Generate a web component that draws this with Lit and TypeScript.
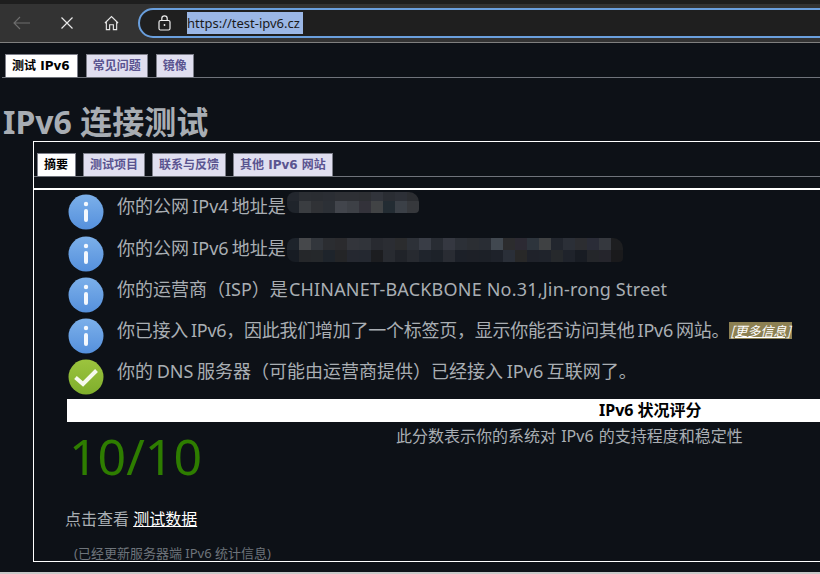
import { LitElement, html, css } from "lit";
import { customElement } from "lit/decorators.js";

const info = html`<svg class="ico" viewBox="0 0 36 36"><defs><linearGradient id="gi" x1="0" y1="0" x2="0" y2="1"><stop offset="0" stop-color="#7cb0ea"/><stop offset="1" stop-color="#5590dc"/></linearGradient></defs><circle cx="18" cy="18" r="17.5" fill="url(#gi)"/><circle cx="18" cy="10" r="2.2" fill="#f4f8fd"/><rect x="16" y="15" width="4" height="13" rx="2" fill="#f4f8fd"/></svg>`;
const ok = html`<svg class="ico" viewBox="0 0 36 36"><defs><linearGradient id="gk" x1="0" y1="0" x2="0" y2="1"><stop offset="0" stop-color="#9cc43e"/><stop offset="1" stop-color="#7fae2c"/></linearGradient></defs><circle cx="18" cy="18" r="17.5" fill="url(#gk)"/><path d="M7.5 18.5 L15 25 L28.5 11.5" fill="none" stroke="#f6f9ee" stroke-width="4"/></svg>`;

const r1a = ["#23272e","#2b2e33","#2a2d32","#2b2e34","#2e3035","#2e3035","#2d2f33","#31343b","#2a2d33","#2d3037","#2b2d31"];
const r1b = ["#1f242b","#3a3d41","#303236","#2c3036","#42454c","#3d4046","#33323a","#414345","#232c33","#3b4047","#36383c"];
const r2a = ["#1d232b","#46484b","#32363c","#2b2d31","#2b2b2e","#33353b","#31343a","#282a30","#2b2d33","#2b2c2e","#2d3138","#393d46","#282c33","#353841","#2c3037","#2b2e33","#292d34","#414850","#2c2c2e","#2c2a33","#2d343c","#3f4143","#22262e","#2b2f37","#2c2d31","#2a2c37","#35383e","#1d1e20"];
const r2b = ["#171c23","#25272a","#25282b","#1e242b","#242527","#252830","#242830","#1c1d20","#282b31","#202329","#272a30","#1f242c","#1d2229","#292c33","#1c2028","#1d2027","#1c2027","#1e222a","#2a2f38","#282828","#1f222a","#1f232b","#26292c","#1f232b","#181c23","#24262a","#25252c","#1a1a1c"];

const blur = (a: string[], b: string[], cls: string) => html`<span class="blur ${cls}">${[a, b].map(
  (row) => html`<span class="blur-row">${row.map((c) => html`<i style="background:${c}"></i>`)}</span>`
)}</span>`;

@customElement("app-root")
export class AppRoot extends LitElement {
  static styles = css`
    :host { display: block; width: 820px; height: 574px; overflow: hidden; background: #0d1117; font-family: "Noto Sans", "Noto Sans CJK SC", sans-serif; color: #a9aeb3; }
    .chrome { height: 43px; box-sizing: border-box; background: linear-gradient(#1e1e1e 0 4px, #333 4px); border-bottom: 1px solid #7f7f7f; display: flex; align-items: center; padding-top: 4px; }
    .nav { display: flex; align-items: center; flex: none; }
    .nav svg { display: block; flex: none; }
    .back { margin-left: 13px; }
    .close { margin-left: 29px; }
    .home { margin-left: 30px; }
    .pill { margin-left: 19px; flex: 1; margin-right: -40px; height: 30px; box-sizing: border-box; border: 2px solid #6a9fdd; border-radius: 15px; background: #1f1f1f; display: flex; align-items: center; padding-left: 18px; }
    .url { margin-left: 16px; background: #9bb7e6; color: #1a1a1a; font: 13px/22px "Noto Sans", sans-serif; white-space: nowrap; width: 116px; }
    .tabs { display: flex; align-items: flex-end; gap: 8px; border-bottom: 1px solid #6f737b; font: bold 12px/16px "DejaVu Sans", "Noto Sans CJK SC", sans-serif; }
    .tabs span { box-sizing: border-box; height: 23px; padding: 3px 6px 0; background: #e0dff0; color: #5a5490; border: 1px solid #7d7f8a; border-bottom: 0; white-space: nowrap; }
    .tabs span.on { background: #fff; color: #000; padding-right: 7px; }
    .top { margin: 11px 0 0 2px; padding-left: 3px; }
    h1 { margin: 26px 0 0 3px; font: bold 32px/36px "Noto Sans", "Noto Sans CJK SC", sans-serif; color: #a8adb3; white-space: nowrap; height: 36px; }
    .box { margin: 1px 0 0 33px; width: 800px; height: 421px; box-sizing: border-box; border: 1px solid #fff; border-right: 0; position: relative; overflow: hidden; }
    .inner { margin-top: 11px; padding-left: 3px; gap: 7px; }
    .rule { height: 2px; background: #fff; margin-top: 11px; }
    .rows { padding-left: 34px; }
    .row { height: 41px; display: flex; align-items: center; gap: 13px; font-size: 18px; line-height: 24px; white-space: nowrap; }
    .ico { width: 36px; height: 36px; flex: none; display: block; }
    .rows .row:first-child { height: 43px; }
    .row .txt { display: flex; align-items: center; margin-top: -12px; word-spacing: -1.5px; }
    .row .tight { letter-spacing: -.25px; }
    .row .loose { word-spacing: -1px; }
    .isp { letter-spacing: .2px; word-spacing: 0; margin-left: 1px; }
    .blur { display: flex; flex-direction: column; margin-left: 1px; border-radius: 8px 10px 4px 8px; overflow: hidden; }
    .b1 { height: 21px; transform: translateY(-3px); }
    .b1 .blur-row:first-child { height: 9px; }
    .b2 { transform: translateY(2px); }
    .blur-row { display: flex; height: 12px; flex: none; }
    .blur-row i { width: 12px; height: 100%; display: block; flex: none; }
    .more { margin-left: 0; background: #8c8052; color: #fff; font: italic 13px/17px "Noto Sans CJK SC", sans-serif; letter-spacing: 0; text-decoration: underline; padding: 0 1px; transform: translateY(1px); }
    .score-head { margin: 2px 0 0 33px; height: 23px; background: #fff; color: #000; font: bold 16px/23px "Noto Sans", "Noto Sans CJK SC", sans-serif; padding-left: 532px; white-space: nowrap; }
    .score { display: flex; margin-left: 34px; height: 71px; padding-top: 1px; box-sizing: border-box; }
    .num { font-size: 50px; line-height: 62px; color: #2e7d00; width: 327px; margin-left: 1px; flex: none; margin-top: 2px; }
    .desc { font-size: 16px; line-height: 26px; white-space: nowrap; word-spacing: 1px; }
    .link { margin: 15px 0 0 31px; font-size: 16px; line-height: 22px; white-space: nowrap; }
    .link a { color: #fff; text-decoration: underline; }
    .note { margin: 14px 0 0 40px; font-size: 13px; line-height: 18px; color: #6e747b; white-space: nowrap; }
    .foot { margin-top: 10px; height: 2px; background: #c8c8c8; }
  `;

  render() {
    return html`
      <div class="chrome">
        <div class="nav">
          <svg class="back" width="18" height="14" viewBox="0 0 18 14" fill="none" stroke="#6f6f6f" stroke-width="1.1"><path d="M1 7 H17 M7 1 L1 7 L7 13"/></svg>
          <svg class="close" width="14" height="14" viewBox="0 0 14 14" fill="none" stroke="#e8e8e8" stroke-width="1.2"><path d="M1.5 1.5 L12.5 12.5 M12.5 1.5 L1.5 12.5"/></svg>
          <svg class="home" width="15" height="16" viewBox="0 0 16 16" fill="none" stroke="#e8e8e8" stroke-width="1.2"><path d="M1 8 L8 1.2 L15 8 M2.5 6.8 V15 H6 V9.8 H10 V15 H13.5 V6.8"/></svg>
        </div>
        <div class="pill">
          <svg width="13" height="16" viewBox="0 0 13 16" fill="none" stroke="#eee" stroke-width="1.2"><rect x="1" y="5.5" width="11" height="9.5" rx="1.5"/><path d="M3.8 5.5 V3.6 a2.7 2.7 0 0 1 5.4 0 V5.5"/><circle cx="6.5" cy="10" r=".9" fill="#eee" stroke="none"/></svg>
          <span class="url">https://test-ipv6.cz</span>
        </div>
      </div>
      <div class="tabs top"><span class="on">测试 IPv6</span><span>常见问题</span><span>镜像</span></div>
      <h1>IPv6 连接测试</h1>
      <div class="box">
        <div class="tabs inner"><span class="on">摘要</span><span>测试项目</span><span>联系与反馈</span><span>其他 IPv6 网站</span></div>
        <div class="rule"></div>
        <div class="rows">
          <div class="row">${info}<span class="txt">你的公网 IPv4 地址是${blur(r1a, r1b, "b1")}</span></div>
          <div class="row">${info}<span class="txt">你的公网 IPv6 地址是${blur(r2a, r2b, "b2")}</span></div>
          <div class="row">${info}<span class="txt">你的运营商（ISP）是<span class="isp">CHINANET-BACKBONE No.31,Jin-rong Street</span></span></div>
          <div class="row">${info}<span class="txt tight">你已接入 IPv6，因此我们增加了一个标签页，显示你能否访问其他 IPv6 网站。<span class="more">[更多信息]</span></span></div>
          <div class="row">${ok}<span class="txt loose">你的 DNS 服务器（可能由运营商提供）已经接入 IPv6 互联网了。</span></div>
        </div>
        <div class="score-head">IPv6 状况评分</div>
        <div class="score"><div class="num">10/10</div><div class="desc">此分数表示你的系统对 IPv6 的支持程度和稳定性</div></div>
        <div class="link">点击查看 <a>测试数据</a></div>
        <div class="note">(已经更新服务器端 IPv6 统计信息)</div>
      </div>
      <div class="foot"></div>
    `;
  }
}
